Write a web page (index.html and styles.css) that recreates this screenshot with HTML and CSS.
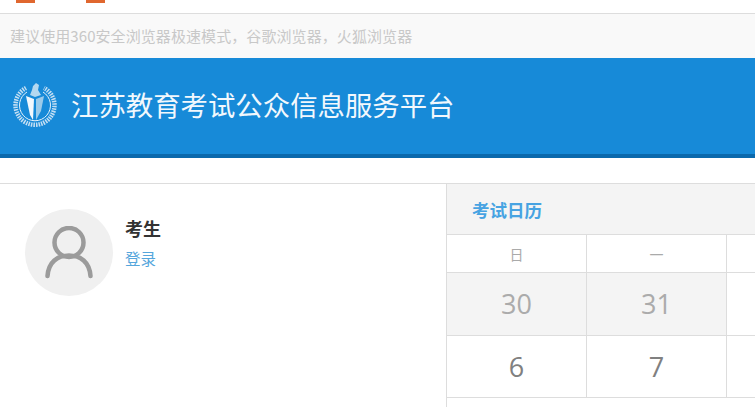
FILE: index.html
```html
<!DOCTYPE html>
<html lang="zh-CN">
<head>
<meta charset="utf-8">
<title>江苏教育考试公众信息服务平台</title>
<link rel="stylesheet" href="styles.css">
</head>
<body>
<div class="topbar">
  <span class="tab-mark"></span>
  <span class="tab-mark"></span>
</div>
<div class="notice">建议使用360安全浏览器极速模式，谷歌浏览器，火狐浏览器</div>
<header class="banner">
  <svg class="logo" width="44" height="45" viewBox="0 0 44 45" aria-hidden="true">
    <path d="M13 6A19.500 19.500 0 1 0 31 6" fill="none" stroke="#c4dff3" stroke-width="4.500" stroke-dasharray="1.500 1"/>
    <path d="M14 10A15.500 15.500 0 1 0 30 10" fill="none" stroke="#e6f2fb" stroke-width="1"/>
    <path d="M20 4l3-3 3 2-1 5 3 5-6 2-5-2 2-5z" fill="#b4d8f0"/>
    <path d="M13 14l8 3-1 21-3-5z" fill="#f2f8fd"/>
    <path d="M31 14l-8 3 0 21 5-9z" fill="#9ccbea"/>
  </svg>
  <h1 class="site-title">江苏教育考试公众信息服务平台</h1>
</header>
<main class="content">
  <section class="profile">
    <div class="avatar">
      <svg width="50" height="54" viewBox="0 0 50 54" aria-hidden="true">
        <circle cx="25" cy="16.500" r="14.500" fill="none" stroke="#9b9b9b" stroke-width="4.500"/>
        <path d="M3.500 50c1-14 10-20.500 21.500-20.500s20.500 6.500 21.500 20.500" fill="none" stroke="#9b9b9b" stroke-width="4.500" stroke-linecap="round"/>
      </svg>
    </div>
    <div class="user">
      <div class="user-name">考生</div>
      <a class="login" href="#">登录</a>
    </div>
  </section>
  <section class="calendar">
    <h2 class="cal-title">考试日历</h2>
    <div class="cal-grid">
      <div class="dow">日</div><div class="dow">一</div><div class="dow"></div>
      <div class="day muted">30</div><div class="day muted">31</div><div class="day"></div>
      <div class="day">6</div><div class="day">7</div><div class="day"></div>
    </div>
  </section>
</main>
</body>
</html>
```
FILE: styles.css
```css
html, body {
  margin: 0;
  padding: 0;
  height: 407px;
  overflow: hidden;
  background: #fff;
  font-family: "Noto Sans CJK SC", "Open Sans", sans-serif;
}
.topbar {
  height: 13px;
  display: flex;
  gap: 51px;
  padding-left: 16px;
  border-bottom: 1px solid #ddd;
}
.tab-mark {
  width: 19px;
  height: 3px;
  background: #e0672f;
}
.notice {
  height: 44px;
  line-height: 44px;
  padding-left: 10px;
  background: #f9f9f9;
  color: #c8c8c8;
  font-size: 15px;
  letter-spacing: 0.08px;
}
.banner {
  height: 100px;
  box-sizing: border-box;
  display: flex;
  align-items: center;
  gap: 14px;
  padding: 0 0 4px 13px;
  background: #178ad8;
  border-bottom: 4px solid #0b69ac;
}
.logo {
  flex: none;
}
.site-title {
  margin: 0;
  font-size: 27.400px;
  font-weight: 400;
  color: #f2f8fd;
  white-space: nowrap;
}
.content {
  margin-top: 25px;
  display: flex;
  border-top: 1px solid #ddd;
}
.profile {
  width: 446px;
  flex: none;
  box-sizing: border-box;
  display: flex;
  gap: 12px;
  padding: 25px 0 0 25px;
}
.avatar {
  width: 88px;
  height: 87px;
  border-radius: 50%;
  background: #f0f0f0;
  display: flex;
  align-items: center;
  justify-content: center;
}
.user-name {
  margin-top: 6px;
  font-size: 18px;
  line-height: 26px;
  font-weight: 700;
  color: #333;
}
.login {
  display: block;
  margin-top: 5px;
  font-size: 15.500px;
  line-height: 24px;
  color: #55a6dc;
  text-decoration: none;
}
.calendar {
  flex: 1;
  min-width: 0;
  overflow: hidden;
  border-left: 1px solid #ddd;
}
.cal-title {
  margin: 0;
  height: 50px;
  line-height: 51px;
  padding-left: 25px;
  background: #f4f4f4;
  border-bottom: 1px solid #ddd;
  color: #47a3e2;
  font-size: 17.500px;
  font-weight: 700;
}
.cal-grid {
  display: grid;
  grid-template-columns: repeat(3, 140px);
  grid-template-rows: 38px 63px 62px 20px;
}
.dow, .day {
  box-sizing: border-box;
  display: flex;
  align-items: center;
  justify-content: center;
  border-right: 1px solid #ddd;
  border-bottom: 1px solid #ddd;
}
.dow {
  font-size: 14px;
  color: #aaa;
}
.day {
  font-size: 27px;
  color: #808080;
  font-family: "Open Sans", sans-serif;
}
.day.muted {
  padding-bottom: 2px;
  background: #f4f4f4;
  color: #ababab;
}
```
